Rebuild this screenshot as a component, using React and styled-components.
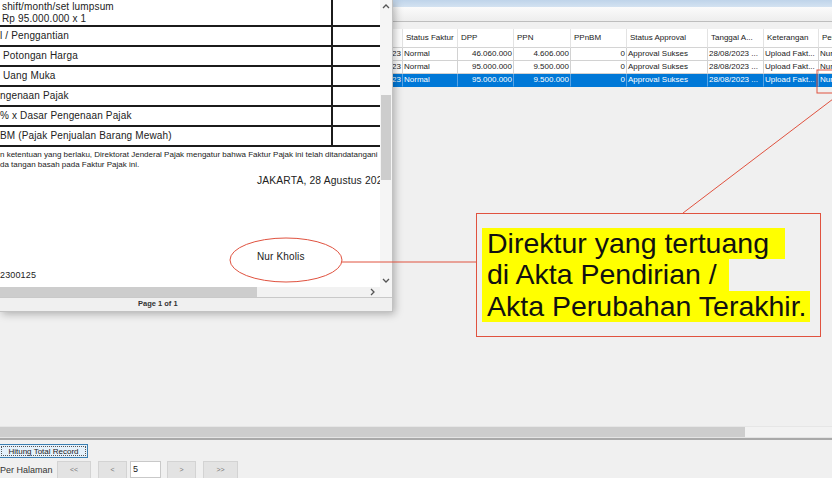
import React from 'react';
import styled, { createGlobalStyle } from 'styled-components';

// # GLOBAL
const Global = createGlobalStyle`
    html, body { margin: 0; padding: 0; background: #f0f0f0; }
    body { font-family: "Liberation Sans", Arial, sans-serif; }
`;

// # STYLED - desktop
const Screen = styled.div`
    position: relative;
    width: 832px;
    height: 478px;
    overflow: hidden;
    background: #f0f0f0;
    font-family: "Liberation Sans", Arial, sans-serif;
`;
const AppWindow = styled.div`
    display: flex;
    flex-direction: column;
    height: 100%;
`;
const TitleStrip = styled.div`
    height: 7px;
    background: linear-gradient(#bfd4ea, #d3e2f1);
`;
const Toolbar = styled.div`
    height: 14px;
    background: linear-gradient(#fbfbfb, #ededed);
    border-bottom: 1px solid #bdbdbd;
`;
const Grid = styled.div`
    margin-top: 7px;
    display: grid;
    grid-template-columns: 403px 55px 56px 57px 56px 81px 56px 55px 60px;
    width: 879px;
    font-size: 8px;
    color: #1a1a1a;
`;
const HeadCell = styled.div`
    height: 18px;
    line-height: 18px;
    padding-left: 3px;
    background: #fff;
    border-right: 1px solid #e3e3e3;
    border-bottom: 1px solid #d4d4d4;
    white-space: nowrap;
    overflow: hidden;
`;
const Cell = styled.div`
    height: 12px;
    line-height: 12px;
    padding: 0 1px;
    text-align: ${p => (p.$num ? 'right' : 'left')};
    background: ${p => (p.$sel ? '#0078d7' : '#fff')};
    color: ${p => (p.$sel ? '#fff' : '#1a1a1a')};
    border-right: 1px solid ${p => (p.$sel ? '#5aa3e3' : '#d2d2d2')};
    border-bottom: 1px solid ${p => (p.$sel ? '#0078d7' : '#d2d2d2')};
    white-space: nowrap;
    overflow: hidden;
`;
const Filler = styled.div`
    flex: 1;
`;
const BottomScroll = styled.div`
    height: 10px;
    display: flex;
    background: #f2f2f2;
    border-top: 1px solid #e6e6e6;
`;
const BottomThumb = styled.div`
    width: 745px;
    background: #cdcdcd;
`;
const Divider = styled.div`
    height: 2px;
    background: #a9a9a9;
    border-top: 1px solid #e4e4e4;
`;
const Footer = styled.div`
    display: flex;
    flex-direction: column;
    gap: 3px;
    padding-top: 4px;
    font-size: 8px;
    color: #1a1a1a;
`;
const CountButton = styled.button`
    width: 89px;
    height: 14px;
    margin-left: -1px;
    padding: 0;
    font: inherit;
    font-size: 8px;
    color: #1a1a1a;
    background: #e5f1fb;
    border: 1px solid #3c7fb1;
    outline: 1px dotted #555;
    outline-offset: -3px;
`;
const Pager = styled.div`
    display: flex;
    align-items: center;
    height: 17px;
`;
const PagerLabel = styled.span`
    font-size: 9px;
    width: 57px;
    color: #333;
`;
const PageButton = styled.div`
    width: ${p => p.$w || 31}px;
    height: 16px;
    margin-right: ${p => p.$gap || 7}px;
    display: flex;
    align-items: center;
    justify-content: center;
    background: #e3e3e3;
    border: 1px solid #d3d3d3;
    font-size: 7px;
    color: #777;
`;
const PageInput = styled.div`
    width: 27px;
    height: 15px;
    margin-right: 6px;
    margin-left: -2px;
    padding-left: 2px;
    line-height: 15px;
    background: #fff;
    border: 1px solid #c9c9c9;
    font-size: 9px;
`;

// # STYLED - dialog
const Dialog = styled.div`
    position: absolute;
    left: 0;
    top: 0;
    width: 392px;
    height: 311px;
    display: flex;
    flex-direction: column;
    background: #f0f0f0;
    border-right: 1px solid #c2c2c2;
    border-bottom: 1px solid #c2c2c2;
    box-shadow: 2px 2px 8px rgba(0, 0, 0, 0.28);
`;
const DialogBody = styled.div`
    display: flex;
    height: 287px;
`;
const Viewport = styled.div`
    width: 380px;
    background: #fff;
    overflow: hidden;
    font-size: 10px;
    color: #222;
    letter-spacing: 0.15px;
`;
const DocTable = styled.div`
    width: 400px;
`;
const DocRow = styled.div`
    display: grid;
    grid-template-columns: 333px 1fr;
    border-bottom: 2px solid #1b1b1b;
`;
const DocLabel = styled.div`
    height: ${p => p.$h || 18}px;
    padding-left: ${p => p.$pad || 0}px;
    border-right: 2px solid #1b1b1b;
    display: flex;
    flex-direction: column;
    justify-content: center;
    line-height: 12px;
    white-space: nowrap;
`;
const Fine = styled.div`
    margin-top: 3px;
    font-size: 8px;
    line-height: 10px;
    letter-spacing: 0;
    white-space: nowrap;
`;
const Place = styled.div`
    margin-top: 5px;
    padding-left: 257px;
    font-size: 10.3px;
    white-space: nowrap;
`;
const Signer = styled.div`
    margin-top: 65px;
    padding-left: 257px;
`;
const DocNo = styled.div`
    margin-top: 8px;
    font-size: 9px;
`;
const VScroll = styled.div`
    width: 12px;
    display: flex;
    flex-direction: column;
    align-items: center;
    background: #f5f5f5;
`;
const VThumb = styled.div`
    width: 10px;
    height: 85px;
    margin-top: 82px;
    background: #cdcdcd;
`;
const ArrowBox = styled.div`
    height: ${p => p.$h || 10}px;
    display: flex;
    align-items: center;
    justify-content: center;
`;
const HScroll = styled.div`
    display: flex;
    height: 10px;
`;
const HTrack = styled.div`
    width: 380px;
    display: flex;
    align-items: center;
    background: #f2f2f2;
`;
const HThumb = styled.div`
    width: 257px;
    height: 10px;
    background: #cdcdcd;
`;
const Corner = styled.div`
    flex: 1;
    background: #f5f5f5;
`;
const StatusBar = styled.div`
    flex: 1;
    border-top: 1px solid #c9c9c9;
    padding-left: 138px;
    font-size: 7.5px;
    font-weight: bold;
    color: #333;
    line-height: 12px;
`;

// # STYLED - annotation
const Overlay = styled.svg`
    position: absolute;
    left: 0;
    top: 0;
    pointer-events: none;
`;
const Callout = styled.div`
    position: absolute;
    left: 476px;
    top: 213px;
    width: 345px;
    height: 124px;
    border: 1px solid #e0523f;
    padding: 14px 0 0 5px;
    box-sizing: border-box;
    font-size: 28.5px;
    color: #111;
`;
const Mark = styled.div`
    width: fit-content;
    height: ${p => p.$h || 31}px;
    line-height: 31px;
    padding: 0 ${p => p.$right || 4}px 0 5px;
    background: #ffff00;
    white-space: pre;
`;

const Chevron = ({ dir }) => {
    const pts = {
        up: '1,5 4,2 7,5',
        down: '1,2 4,5 7,2',
        right: '2,1 5,4 2,7',
    }[dir];
    return (
        <svg width="8" height="8" viewBox="0 0 8 8">
            <polyline points={pts} fill="none" stroke="#555" strokeWidth="1.3" />
        </svg>
    );
};

const header = ['', 'Status Faktur', 'DPP', 'PPN', 'PPnBM', 'Status Approval', 'Tanggal A...', 'Keterangan', 'Pengguna'];
const rows = [
    ['46.060.000', '4.606.000'],
    ['95.000.000', '9.500.000'],
    ['95.000.000', '9.500.000'],
];

const docRows = [
    { text: 'l / Penggantian', pad: 0 },
    { text: 'Potongan Harga', pad: 3 },
    { text: 'Uang Muka', pad: 3 },
    { text: 'ngenaan Pajak', pad: 0 },
    { text: '% x Dasar Pengenaan Pajak', pad: 0 },
    { text: 'BM (Pajak Penjualan Barang Mewah)', pad: 0 },
];

// # COMPONENT
export default function App() {
    return (
        <Screen>
            <Global />
            <AppWindow>
                <TitleStrip />
                <Toolbar />
                <Grid>
                    {header.map((h, i) => <HeadCell key={'h' + i}>{h}</HeadCell>)}
                    {rows.map((r, i) => {
                        const sel = i === 2;
                        return (
                            <React.Fragment key={'r' + i}>
                                <Cell $sel={sel} $num>28/08/2023</Cell>
                                <Cell $sel={sel}>Normal</Cell>
                                <Cell $sel={sel} $num>{r[0]}</Cell>
                                <Cell $sel={sel} $num>{r[1]}</Cell>
                                <Cell $sel={sel} $num>0</Cell>
                                <Cell $sel={sel}>Approval Sukses</Cell>
                                <Cell $sel={sel}>28/08/2023 ...</Cell>
                                <Cell $sel={sel}>Upload Fakt...</Cell>
                                <Cell $sel={sel}>Nur Kholis</Cell>
                            </React.Fragment>
                        );
                    })}
                </Grid>
                <Filler />
                <BottomScroll><BottomThumb /></BottomScroll>
                <Divider />
                <Footer>
                    <CountButton>Hitung Total Record</CountButton>
                    <Pager>
                        <PagerLabel>Per Halaman</PagerLabel>
                        <PageButton $w={32}>&lt;&lt;</PageButton>
                        <PageButton $w={27} $gap={5}>&lt;</PageButton>
                        <PageInput>5</PageInput>
                        <PageButton $w={27}>&gt;</PageButton>
                        <PageButton $w={33}>&gt;&gt;</PageButton>
                    </Pager>
                </Footer>
            </AppWindow>

            <Dialog>
                <DialogBody>
                    <Viewport>
                        <DocTable>
                            <DocRow>
                                <DocLabel $h={25} $pad={2}>
                                    <span>shift/month/set lumpsum</span>
                                    <span>Rp 95.000.000 x 1</span>
                                </DocLabel>
                            </DocRow>
                            {docRows.map(d => (
                                <DocRow key={d.text}>
                                    <DocLabel $pad={d.pad}>{d.text}</DocLabel>
                                </DocRow>
                            ))}
                        </DocTable>
                        <Fine>
                            n ketentuan yang berlaku, Direktorat Jenderal Pajak mengatur bahwa Faktur Pajak ini telah ditandatangani
                            <br />
                            da tangan basah pada Faktur Pajak ini.
                        </Fine>
                        <Place>JAKARTA, 28 Agustus 2023</Place>
                        <Signer>Nur Kholis</Signer>
                        <DocNo>2300125</DocNo>
                    </Viewport>
                    <VScroll>
                        <ArrowBox $h={13}><Chevron dir="up" /></ArrowBox>
                        <VThumb />
                        <Filler />
                        <ArrowBox $h={12}><Chevron dir="down" /></ArrowBox>
                    </VScroll>
                </DialogBody>
                <HScroll>
                    <HTrack>
                        <HThumb />
                        <Filler />
                        <Chevron dir="right" />
                        <span style={{ width: 3 }} />
                    </HTrack>
                    <Corner />
                </HScroll>
                <StatusBar>Page 1 of 1</StatusBar>
            </Dialog>

            <Overlay width="832" height="478" viewBox="0 0 832 478">
                <rect x="817" y="70" width="30" height="23" fill="none" stroke="#e0523f" strokeWidth="1" />
                <line x1="833" y1="99" x2="683" y2="213" stroke="#e0523f" strokeWidth="1" />
                <ellipse cx="286" cy="260" rx="56" ry="22" fill="none" stroke="#e0523f" strokeWidth="1" />
                <line x1="342" y1="262" x2="476" y2="262" stroke="#e0523f" strokeWidth="1" />
            </Overlay>

            <Callout>
                <Mark $right={8}>Direktur yang tertuang </Mark>
                <Mark $h={32}>di Akta Pendirian / </Mark>
                <Mark $right={3}>Akta Perubahan Terakhir.</Mark>
            </Callout>
        </Screen>
    );
}
